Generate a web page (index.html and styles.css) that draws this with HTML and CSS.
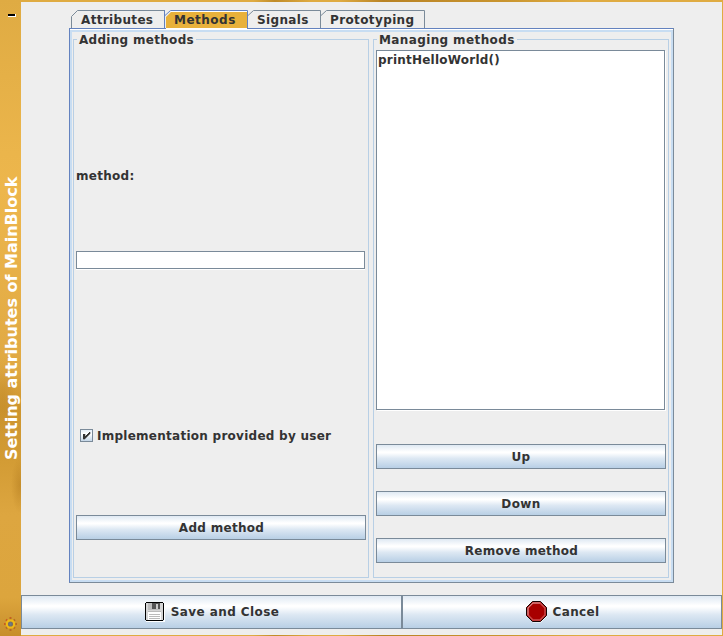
FILE: index.html
```html
<!DOCTYPE html>
<html lang="en">
<head>
<meta charset="utf-8">
<title>Setting attributes of MainBlock</title>
<link rel="stylesheet" href="styles.css">
</head>
<body>
<div class="window">
  <aside class="titlebar">
    <span class="minimize"></span>
    <h1 class="title">Setting attributes of MainBlock</h1>
    <svg class="gear" width="13" height="14" viewBox="0 0 13 14">
      <path d="M6.5 0V14M0 7H13M2 2.5L11 11.5M11 2.5L2 11.5" stroke="#b56a25" stroke-width="2"/>
      <circle cx="6.5" cy="7" r="3.7" fill="#777064" stroke="#efb916" stroke-width="2.2"/>
      <path d="M5 7H8M6.5 5.5V8.5" stroke="#697990" stroke-width="1"/>
      <path d="M0 7H1M2 3H3M6 0H7" stroke="#e84b17"/>
    </svg>
  </aside>
  <main class="content">
    <nav class="tabs">
      <div class="tab attributes"><svg width="95" height="19"><path d="M.5 18V6.5L6.5.5H93.5" fill="none" stroke="#7a8a99"/><path d="M93.5 0V18" stroke="#6382bf"/></svg><span>Attributes</span></div>
      <div class="tab methods"><svg width="83" height="19"><path d="M1 18V7L6 2H82V18Z" fill="#e8b13b"/><path d="M0 5.5L5.5.5H82.5V18" fill="none" stroke="#6382bf"/><path d="M6 1.5H82M1 18.5H82" stroke="#fff"/></svg><span>Methods</span></div>
      <div class="tab signals"><svg width="73" height="19"><path d="M0 5.5L5.5.5H72.5V18" fill="none" stroke="#7a8a99"/></svg><span>Signals</span></div>
      <div class="tab prototyping"><svg width="104" height="19"><path d="M0 5.5L5.5.5H103.5V18" fill="none" stroke="#7a8a99"/></svg><span>Prototyping</span></div>
    </nav>
    <section class="panel">
      <fieldset class="group adding">
        <legend><span class="l-adding">Adding methods</span></legend>
        <label class="method-label" for="method">method:</label>
        <input class="method-input" id="method" type="text">
        <div class="check-row">
          <span class="checkbox"><svg width="11" height="11" shape-rendering="crispEdges"><path d="M2 4H4V6H5V5H6V4H7V3H8V2H9V4H8V5H7V6H6V7H5V8H4V9H2Z" fill="#333" stroke="#333" stroke-width=".3"/></svg></span>
          <span class="l-impl">Implementation provided by user</span>
        </div>
        <button class="button"><span class="l-add">Add method</span></button>
      </fieldset>
      <fieldset class="group managing">
        <legend><span class="l-managing">Managing methods</span></legend>
        <div class="list"><span class="l-print">printHelloWorld()</span></div>
        <div class="actions">
          <button class="button"><span class="l-up">Up</span></button>
          <button class="button"><span class="l-down">Down</span></button>
          <button class="button"><span class="l-remove">Remove method</span></button>
        </div>
      </fieldset>
    </section>
    <footer class="footer">
      <button class="button save">
        <svg width="20" height="20" shape-rendering="crispEdges">
          <path d="M1 19H19V1H20V20H1Z" fill="#fff"/><path d="M1 0H18V1H19V18H18V19H1V18H0V1H1Z" fill="#000"/>
          <path d="M1 1H18V18H1Z" fill="#d6d6d6"/>
          <path d="M3 1H15V8H3Z" fill="#bdbdbd"/><path d="M7 1H15V7H7Z" fill="#555"/><path d="M11 2H13V7H11Z" fill="#ccc"/>
          <path d="M3 10H16V18H3Z" fill="#fff"/><path d="M3 9.5H16M4 12.5H15M4 14.5H15M4 16.5H15" stroke="#bbb"/>
        </svg><span class="l-save">Save and Close</span>
      </button>
      <button class="button cancel">
        <svg width="22" height="22"><path d="M7 1.5H15L21 7.5V15L15 21.5H7L1 15V7.5Z" fill="#fff"/><path d="M6.5.5H14.5L20.5 6.5V14.5L14.5 20.5H6.5L.5 14.5V6.5Z" fill="#a80000" stroke="#160000"/><path d="M7 2H14L19 7V14L14 19H7L2 14V7Z" fill="none" stroke="#c95353" stroke-width="1.3"/><path d="M2 14V7L7 2H14" fill="none" stroke="#d88a8a"/></svg><span class="l-cancel">Cancel</span>
      </button>
    </footer>
  </main>
</div>
</body>
</html>
```
FILE: styles.css
```css
* { box-sizing: border-box; }
body { margin: 0; }
.window {
  width: 723px; height: 636px; display: flex; padding: 2px 1px 1px 0; overflow: hidden;
  background: linear-gradient(90deg, #dfab42 0 35%, #c08b28 38%, #dfab42 43% 47%, #b98325 53%, #c9952f 70%, #dfab42 80%);
  font: bold 12px/14px "DejaVu Sans", sans-serif; color: #333;
}
.titlebar {
  width: 21px; margin: -2px 0 -1px; padding: 14px 0 5px; flex: none; display: flex; flex-direction: column; align-items: center;
  background: radial-gradient(ellipse 9px 28px at 20px 485px, #b8812399, #b8812300),
    radial-gradient(ellipse 14px 38px at 3px 395px, #b9822655, #b9822600),
    linear-gradient(#dfab43, #ebb54b 24%, #edb64c 30%, #e0a943 58%, #cd952f 64%, #d29b34 72%, #dda640 81%, #dca53d 94%, #c78e2b);
}
.minimize { width: 8px; height: 3px; border: solid #fff; border-width: 0 1px 1px 0; background: #000; margin-left: 3px; }
.title {
  margin: 157px 0 0 2px; height: 286px; width: 18px; color: #fff; writing-mode: vertical-rl; transform: rotate(180deg);
  font-size: 16px; line-height: 18px; white-space: nowrap; display: flex; align-items: center;
}
.gear { margin-top: auto; display: block; }
.content { flex: 1; background: #eee; display: flex; flex-direction: column; }
.tabs { display: flex; margin: 8px 0 0 50px; height: 18px; }
.tab { position: relative; height: 19px; }
.tab svg { position: absolute; left: 0; top: 0; }
.tab span { position: relative; display: block; padding-top: 3px; white-space: nowrap; }
.attributes { width: 94px; padding-left: 10px; letter-spacing: .34px; }
.methods { width: 83px; padding-left: 9px; z-index: 1; letter-spacing: .5px; }
.signals { width: 73px; padding-left: 9px; letter-spacing: .35px; }
.prototyping { width: 105px; padding-left: 9px; letter-spacing: .38px; }
.panel {
  display: grid; grid-template-columns: 296px 296px; column-gap: 4px; width: 605px; height: 555px; margin-left: 48px; padding: 5px 2px 2px 1px;
  border: 1px solid #7a8a99; border-top-color: #6382bf; border-left-color: #6382bf;
  box-shadow: inset 0 1px #fff, inset 2px 0 #c8ddf2, inset -2px -2px #c8ddf2, inset 0 3px #c8ddf2;
}
.group {
  position: relative; min-width: 0; margin: 5px 0 0 2px; width: 296px; height: 539px; padding: 0 2px; border: 1px solid #b8cfe5;
  display: flex; flex-direction: column;
}
legend { position: absolute; top: -7px; left: 3px; padding: 0 2px; background: #eee; line-height: 14px; white-space: nowrap; }
.method-label { margin-top: 129px; height: 14px; letter-spacing: .27px; }
.method-input { width: 289px; height: 18px; margin: 68px 0 0; padding: 0 2px; border: 1px solid #7a8a99; background: #fff; outline: 0; box-shadow: 0 1px #fff; font: inherit; }
.check-row { display: flex; align-items: center; gap: 4px; margin: 159px 0 0 4px; height: 15px; }
.checkbox { width: 13px; height: 13px; border: 1px solid #7a8a99; background: linear-gradient(#e5eef7, #fff 35%, #c5d7e8); }
.checkbox svg { display: block; }
.button {
  display: flex; align-items: center; justify-content: center; width: 290px; height: 25px; padding: 0; border: 1px solid #7a8a99; border-radius: 0;
  background: linear-gradient(#dfe9f3, #fff 30%, #fff 34%, #dde8f3 58%, #b8cfe5); color: #333; font: inherit; line-height: 14px;
}
.adding .button { margin-top: 72px; }
.list { width: 289px; height: 360px; margin-top: 10px; padding: 2px 1px; border: 1px solid #7a8a99; background: #fff; box-shadow: 1px 1px #fff; }
.actions { display: grid; gap: 22px; margin-top: 34px; }
.footer { display: flex; margin-top: 12px; height: 34px; }
.footer .button { height: 34px; flex: none; }
.footer .save { width: 381px; gap: 6px; padding-left: 1px; }
.footer .cancel { width: 320px; gap: 5px; padding-left: 1px; }
.l-adding { letter-spacing: .3px; }
.l-managing { letter-spacing: .38px; }
.l-print { display: block; letter-spacing: .22px; }
.l-impl { letter-spacing: .26px; }
.l-add { letter-spacing: .3px; padding-left: 1px; }
.l-up, .l-down { letter-spacing: .4px; }
.l-remove { letter-spacing: .25px; padding-left: 1px; }
.l-save { letter-spacing: .42px; }
.l-cancel { letter-spacing: .35px; }
```
